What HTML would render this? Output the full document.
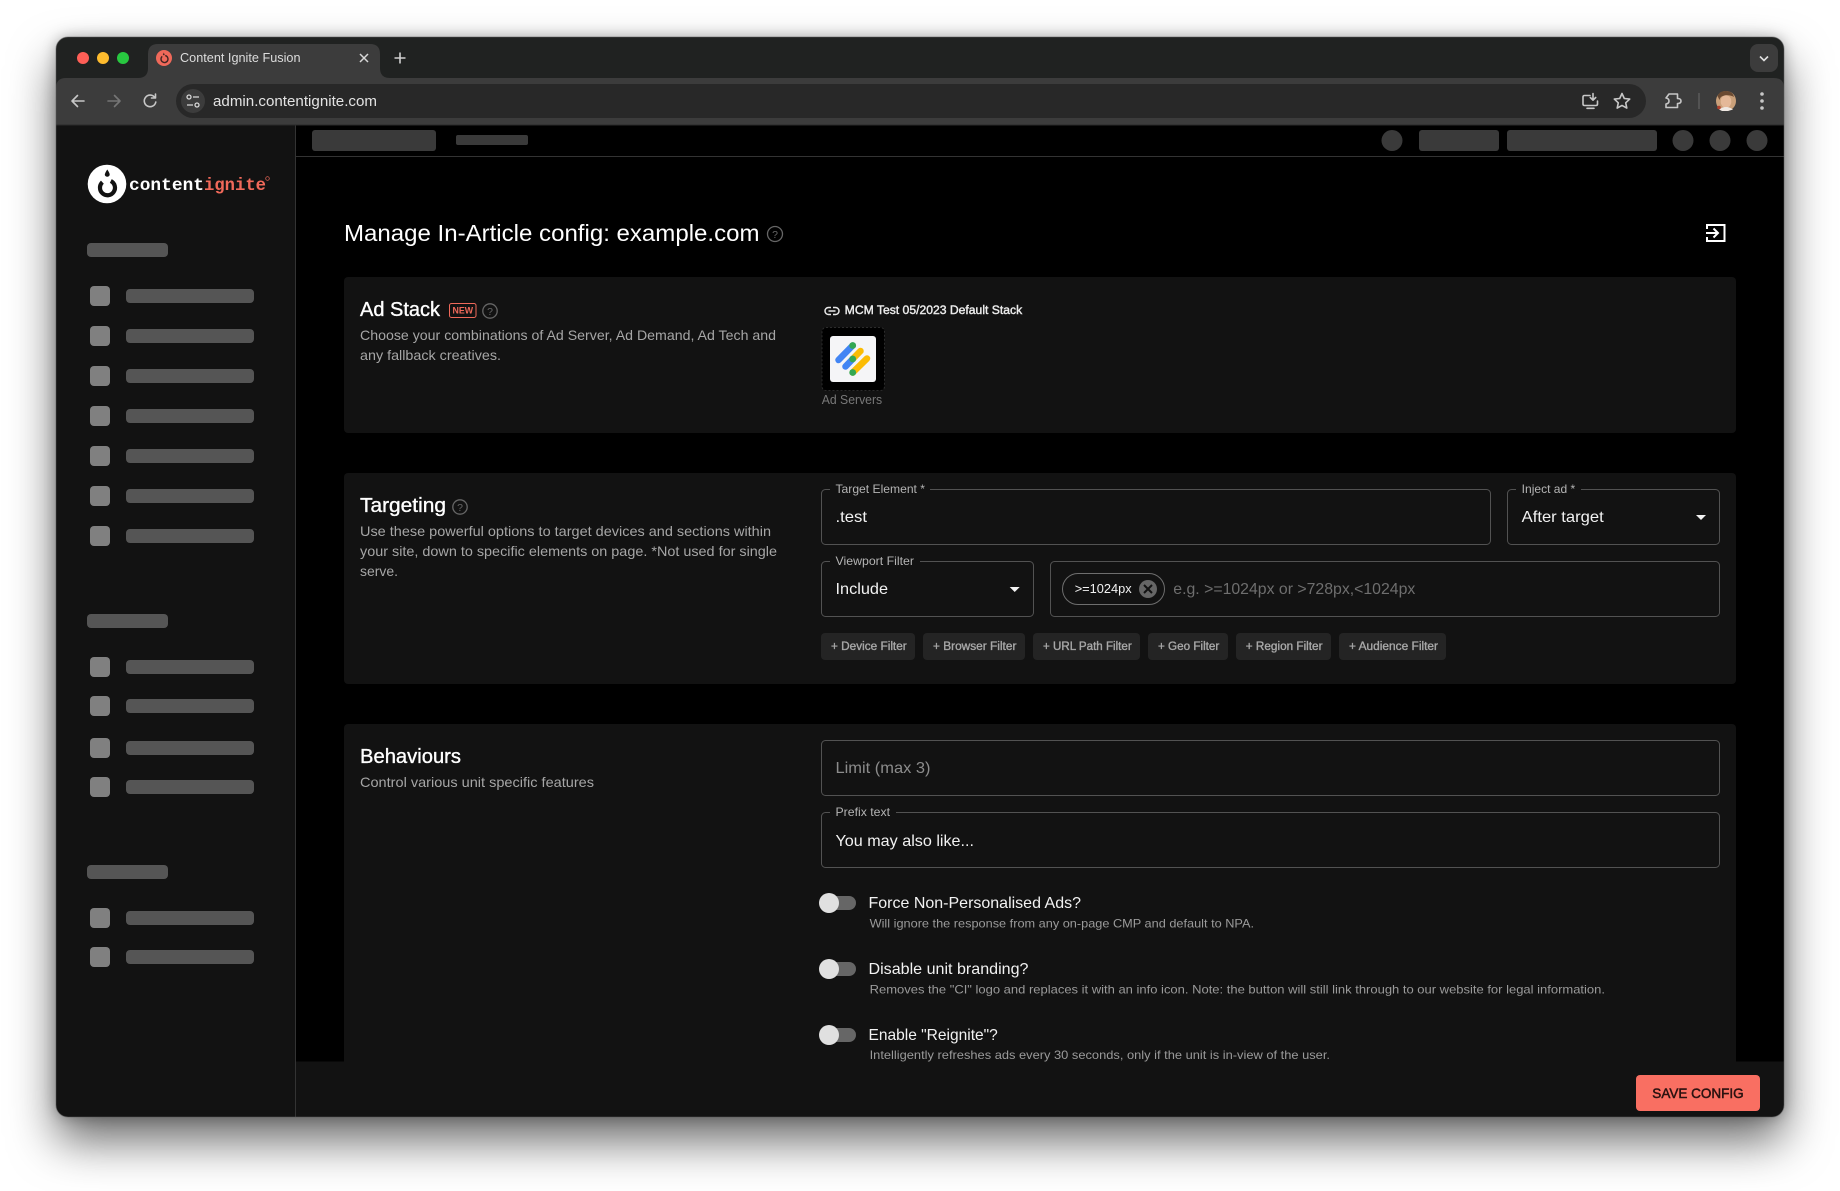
<!DOCTYPE html>
<html lang="en">
<head>
<meta charset="utf-8">
<title>Content Ignite Fusion</title>
<style>
html,body{margin:0;padding:0;width:1840px;height:1191px;overflow:hidden;background:#fff}
#shadow{position:absolute;left:56px;top:37px;width:1728px;height:1080px;border-radius:12px;box-shadow:0 24px 46px rgba(0,0,0,.58),0 0 14px rgba(0,0,0,.28)}
svg{position:absolute;left:0;top:0;display:block}
text{font-family:"Liberation Sans",sans-serif;white-space:pre}
.mono{font-family:"Liberation Mono",monospace;font-weight:700}
.f{fill:none;stroke:#525252;stroke-width:1}
.n{fill:#121212}
.lab{fill:#b4b4b4;font-size:11.7px}
.val{fill:#f2f2f2;font-size:16px}
.desc{fill:#a6a6a6;font-size:14px}
.h{fill:#fff;font-size:20px;stroke:#fff;stroke-width:.35}
.sub{fill:#9a9a9a;font-size:12px}
.btn{fill:#242424}
.bt{fill:#a8a8a8;font-size:11.5px;stroke:#a8a8a8;stroke-width:.35}
.sq{fill:#808080}
.bar{fill:#555}
.top{fill:#3a3a3a}
.help{fill:none;stroke:#666;stroke-width:1.3}
.ht{fill:#666;font-size:10.5px;text-anchor:middle}
.ic{fill:none;stroke:#c7c7c7;stroke-width:1.6;stroke-linecap:round;stroke-linejoin:round}
</style>
</head>
<body>
<div id="shadow"></div>
<svg width="1840" height="1191" viewBox="0 0 1840 1191" xmlns="http://www.w3.org/2000/svg">
<defs><clipPath id="w"><rect x="56" y="37" width="1728" height="1080" rx="12"/></clipPath></defs>
<g clip-path="url(#w)">
  <!-- browser chrome -->
  <rect x="56" y="37" width="1728" height="90" fill="#202221"/>
  <path d="M56 125V88Q56 78 66 78H1774Q1784 78 1784 88V125Z" fill="#3c3c3c"/>
  <path d="M138 78Q148 78 148 68V54Q148 44 158 44H370Q380 44 380 54V68Q380 78 390 78Z" fill="#3c3c3c"/>
  <circle cx="83" cy="58" r="6" fill="#ff5f57"/><circle cx="103" cy="58" r="6" fill="#febc2e"/><circle cx="123" cy="58" r="6" fill="#28c840"/>
  <circle cx="164" cy="58" r="8" fill="#f0695a"/>
  <path d="M165.200 55.600A3.500 3.500 0 1 1 162.200 56.400" fill="none" stroke="#402522" stroke-width="1.400"/>
  <path d="M163.800 52.500l1 2.600-2 0z" fill="#402522"/>
  <text x="180" y="62" font-size="12.5" fill="#dcdcdc" textLength="120.5" lengthAdjust="spacingAndGlyphs">Content Ignite Fusion</text>
  <path d="M360 54l8 8M368 54l-8 8" stroke="#d8d8d8" stroke-width="1.5" fill="none"/>
  <path d="M400 52.5v11M394.5 58h11" stroke="#d0d0d0" stroke-width="1.6" fill="none"/>
  <rect x="1750" y="44" width="28" height="28" rx="8" fill="#3c3c3c"/>
  <path d="M1760 56.5l4 4 4-4" fill="none" stroke="#e0e0e0" stroke-width="1.6"/>

  <path class="ic" d="M84 101H72.500M77.500 95.500L72 101L77.500 106.500"/>
  <path class="ic" style="stroke:#757575" d="M108 101H119.500M114.500 95.500L120 101L114.500 106.500"/>
  <path class="ic" d="M154.800 97.500A5.800 5.800 0 1 0 155.800 102M155.500 94V98H151.500"/>

  <rect x="176" y="84" width="1470" height="34" rx="17" fill="#282828"/>
  <circle cx="193" cy="101" r="12" fill="#3c3c3c"/>
  <circle cx="189" cy="97" r="2" fill="none" stroke="#d8d8d8" stroke-width="1.3"/>
  <path d="M193 97h6M187 105h6" stroke="#d8d8d8" stroke-width="1.3" fill="none"/>
  <circle cx="197" cy="105" r="2" fill="none" stroke="#d8d8d8" stroke-width="1.3"/>
  <text x="213" y="106" font-size="14.5" fill="#e3e3e3" textLength="164" lengthAdjust="spacingAndGlyphs">admin.contentignite.com</text>

  <path class="ic" stroke-width="1.5" d="M1590 95.500H1584.500Q1583 95.500 1583 97V104Q1583 105.500 1584.500 105.500H1596Q1597.500 105.500 1597.500 104V101M1587 108.300H1594M1593 93.500V100M1590.300 97.500L1593 100.200L1595.700 97.500"/>
  <path class="ic" d="M1622 93.500l2.300 5 5.400.6-4 3.700 1.100 5.300-4.800-2.700-4.800 2.700 1.100-5.300-4-3.700 5.400-.6z"/>
  <path class="ic" d="M1669 94H1677.500V98.500Q1681 98.500 1681 101T1677.500 103.500V107.500H1666V104Q1669 103.500 1669 101T1666 98Z"/>
  <rect x="1698.500" y="93" width="1" height="16" fill="#6a6a6a"/>
  <circle cx="1726" cy="101" r="10" fill="#c9a07a"/>
  <path d="M1717.500 96Q1720 90.500 1726 91Q1732.500 91 1734 97Q1730 94.500 1725 95.500Q1720 96 1719.500 100Z" fill="#6a4a32"/>
  <ellipse cx="1726" cy="101.500" rx="5.300" ry="6.300" fill="#e4b898"/>
  <path d="M1719 109.500Q1726 104.500 1733 109.500L1728 111H1722Z" fill="#efe8e2"/>
  <circle cx="1719" cy="107.500" r="1.800" fill="#b2402c"/>
  <circle cx="1762" cy="94" r="1.800" fill="#c7c7c7"/><circle cx="1762" cy="101" r="1.800" fill="#c7c7c7"/><circle cx="1762" cy="108" r="1.800" fill="#c7c7c7"/>

  <!-- app frame -->
  <rect x="296" y="125" width="1488" height="938" fill="#000"/>
  <rect x="56" y="125" width="240" height="992" fill="#121212"/>
  <rect x="295" y="125" width="1" height="992" fill="#333"/>
  <rect x="296" y="156" width="1488" height="1" fill="#333"/>
  <rect x="56" y="124.500" width="1728" height="1" fill="#2a2a2a"/>

  <rect class="top" x="312" y="130" width="124" height="21" rx="3"/>
  <rect class="top" x="456" y="135" width="72" height="10" rx="2"/>
  <circle class="top" cx="1392" cy="140.500" r="10.500"/>
  <rect class="top" x="1419" y="130" width="80" height="21" rx="3"/>
  <rect class="top" x="1507" y="130" width="150" height="21" rx="3"/>
  <circle class="top" cx="1683" cy="140.500" r="10.500"/>
  <circle class="top" cx="1720" cy="140.500" r="10.500"/>
  <circle class="top" cx="1757" cy="140.500" r="10.500"/>

  <!-- sidebar logo -->
  <circle cx="107" cy="184" r="19.300" fill="#fff"/>
  <path d="M110.800 181A7.500 7.500 0 1 1 102.400 182.200" fill="none" stroke="#121212" stroke-width="4.200"/>
  <path d="M107.300 169.500Q110 173.500 109.700 175A2.600 2.600 0 0 1 104.800 175Q104.800 173 107.300 169.500Z" fill="#121212"/>
  <text class="mono" x="129" y="190" font-size="17.500" fill="#fff" textLength="75" lengthAdjust="spacingAndGlyphs">content</text>
  <text class="mono" x="204" y="190" font-size="17.500" fill="#f0695a" textLength="62" lengthAdjust="spacingAndGlyphs">ignite</text>
  <circle cx="267.500" cy="178.500" r="1.800" fill="none" stroke="#f0695a" stroke-width=".7"/>

  <!-- sidebar placeholders -->
  <rect class="bar" x="87" y="243" width="81" height="14" rx="4"/>
  <rect class="sq" x="90" y="286" width="20" height="20" rx="4"/><rect class="bar" x="126" y="289" width="128" height="14" rx="4"/>
  <rect class="sq" x="90" y="326" width="20" height="20" rx="4"/><rect class="bar" x="126" y="329" width="128" height="14" rx="4"/>
  <rect class="sq" x="90" y="366" width="20" height="20" rx="4"/><rect class="bar" x="126" y="369" width="128" height="14" rx="4"/>
  <rect class="sq" x="90" y="406" width="20" height="20" rx="4"/><rect class="bar" x="126" y="409" width="128" height="14" rx="4"/>
  <rect class="sq" x="90" y="446" width="20" height="20" rx="4"/><rect class="bar" x="126" y="449" width="128" height="14" rx="4"/>
  <rect class="sq" x="90" y="486" width="20" height="20" rx="4"/><rect class="bar" x="126" y="489" width="128" height="14" rx="4"/>
  <rect class="sq" x="90" y="526" width="20" height="20" rx="4"/><rect class="bar" x="126" y="529" width="128" height="14" rx="4"/>

  <rect class="bar" x="87" y="614" width="81" height="14" rx="4"/>
  <rect class="sq" x="90" y="657" width="20" height="20" rx="4"/><rect class="bar" x="126" y="660" width="128" height="14" rx="4"/>
  <rect class="sq" x="90" y="696" width="20" height="20" rx="4"/><rect class="bar" x="126" y="699" width="128" height="14" rx="4"/>
  <rect class="sq" x="90" y="738" width="20" height="20" rx="4"/><rect class="bar" x="126" y="741" width="128" height="14" rx="4"/>
  <rect class="sq" x="90" y="777" width="20" height="20" rx="4"/><rect class="bar" x="126" y="780" width="128" height="14" rx="4"/>

  <rect class="bar" x="87" y="865" width="81" height="14" rx="4"/>
  <rect class="sq" x="90" y="908" width="20" height="20" rx="4"/><rect class="bar" x="126" y="911" width="128" height="14" rx="4"/>
  <rect class="sq" x="90" y="947" width="20" height="20" rx="4"/><rect class="bar" x="126" y="950" width="128" height="14" rx="4"/>

  <!-- page title -->
  <text x="344" y="241" font-size="23" fill="#fff" textLength="415.500" lengthAdjust="spacingAndGlyphs">Manage In-Article config: example.com</text>
  <circle class="help" cx="775" cy="234" r="7.500"/><text class="ht" x="775" y="238">?</text>
  <path d="M1707 229V225H1724.500V241H1707V237M1706 233H1718M1713.500 228.500L1718 233L1713.500 237.500" fill="none" stroke="#fff" stroke-width="2"/>

  <!-- Ad Stack card -->
  <rect x="344" y="277" width="1392" height="156" rx="4" fill="#121212"/>
  <text class="h" x="360" y="316" textLength="80" lengthAdjust="spacingAndGlyphs">Ad Stack</text>
  <rect x="449.500" y="303.500" width="26.500" height="14" rx="2" fill="none" stroke="#f0695a"/>
  <text x="452.500" y="313.500" font-size="9" fill="#f0695a" font-weight="700" textLength="20.500" lengthAdjust="spacingAndGlyphs">NEW</text>
  <circle class="help" cx="490" cy="311" r="7.200"/><text class="ht" x="490" y="315">?</text>
  <text class="desc" x="360" y="340" textLength="416" lengthAdjust="spacingAndGlyphs">Choose your combinations of Ad Server, Ad Demand, Ad Tech and</text>
  <text class="desc" x="360" y="360" textLength="141" lengthAdjust="spacingAndGlyphs">any fallback creatives.</text>

  <path d="M831 307.500H828.500A3.500 3.500 0 0 0 828.500 314.500H831M833 307.500H835.500A3.500 3.500 0 0 1 835.500 314.500H833M828.500 311H835.500" fill="none" stroke="#e8e8e8" stroke-width="1.500"/>
  <text x="844.700" y="314" font-size="11.500" fill="#ececec" stroke="#ececec" stroke-width=".4" textLength="177.500" lengthAdjust="spacingAndGlyphs">MCM Test 05/2023 Default Stack</text>
  <rect x="822" y="327.500" width="62.500" height="63" rx="4" fill="#000" stroke="#2c2c2c" stroke-dasharray="2 2"/>
  <rect x="830" y="336" width="46" height="46" rx="3" fill="#f5f5f7"/>
  <g fill="none" stroke-linecap="round" stroke-width="6.500">
    <path d="M838.500 360L852.700 345.500" stroke="#4285f4"/>
    <path d="M852.700 359L860.500 351" stroke="#fbbc04"/>
    <path d="M845.500 366.500L852.700 359" stroke="#4285f4"/>
    <path d="M852.700 372.500L867 358.500" stroke="#fbbc04"/>
  </g>
  <circle cx="852.700" cy="345.500" r="3.400" fill="#34a853"/><circle cx="852.700" cy="359" r="3.400" fill="#34a853"/><circle cx="852.700" cy="372.500" r="3.400" fill="#34a853"/>
  <text x="821.700" y="404" font-size="12.500" fill="#787878" textLength="60.500" lengthAdjust="spacingAndGlyphs">Ad Servers</text>

  <!-- Targeting card -->
  <rect x="344" y="473" width="1392" height="211" rx="4" fill="#121212"/>
  <text class="h" x="360" y="512" textLength="86" lengthAdjust="spacingAndGlyphs">Targeting</text>
  <circle class="help" cx="460" cy="507" r="7.200"/><text class="ht" x="460" y="511">?</text>
  <text class="desc" x="360" y="536" textLength="411" lengthAdjust="spacingAndGlyphs">Use these powerful options to target devices and sections within</text>
  <text class="desc" x="360" y="556" textLength="417" lengthAdjust="spacingAndGlyphs">your site, down to specific elements on page. *Not used for single</text>
  <text class="desc" x="360" y="576" textLength="38" lengthAdjust="spacingAndGlyphs">serve.</text>

  <rect class="f" x="821.500" y="489.500" width="669" height="55" rx="4"/>
  <rect class="n" x="830" y="486" width="100" height="8"/>
  <text class="lab" x="835.500" y="493" textLength="89.500" lengthAdjust="spacingAndGlyphs">Target Element *</text>
  <text class="val" x="835.500" y="522" textLength="31.500" lengthAdjust="spacingAndGlyphs">.test</text>

  <rect class="f" x="1507.500" y="489.500" width="212" height="55" rx="4"/>
  <rect class="n" x="1516" y="486" width="65" height="8"/>
  <text class="lab" x="1521.700" y="493" textLength="53.500" lengthAdjust="spacingAndGlyphs">Inject ad *</text>
  <text class="val" x="1521.700" y="522" textLength="82" lengthAdjust="spacingAndGlyphs">After target</text>
  <path d="M1696 515H1706L1701 520Z" fill="#f2f2f2"/>

  <rect class="f" x="821.500" y="561.500" width="212" height="55" rx="4"/>
  <rect class="n" x="830" y="558" width="90" height="8"/>
  <text class="lab" x="835.500" y="565" textLength="78.500" lengthAdjust="spacingAndGlyphs">Viewport Filter</text>
  <text class="val" x="835.500" y="594" textLength="52.500" lengthAdjust="spacingAndGlyphs">Include</text>
  <path d="M1009.700 587H1019.700L1014.700 592Z" fill="#f2f2f2"/>

  <rect class="f" x="1050.500" y="561.500" width="669" height="55" rx="4"/>
  <rect x="1062.500" y="573.500" width="102" height="31" rx="15.500" fill="none" stroke="#6e6e6e"/>
  <text x="1074.700" y="593" font-size="13" fill="#f2f2f2" textLength="57" lengthAdjust="spacingAndGlyphs">&gt;=1024px</text>
  <circle cx="1148" cy="589" r="9" fill="#666"/>
  <path d="M1144 585l8 8M1152 585l-8 8" stroke="#121212" stroke-width="2" fill="none"/>
  <text x="1173.300" y="594" font-size="16" fill="#6e6e6e" textLength="242" lengthAdjust="spacingAndGlyphs">e.g. &gt;=1024px or &gt;728px,&lt;1024px</text>

  <rect class="btn" x="821" y="633" width="94" height="27" rx="4"/>
  <text class="bt" x="831" y="650" textLength="75.700" lengthAdjust="spacingAndGlyphs">+ Device Filter</text>
  <rect class="btn" x="923" y="633" width="102" height="27" rx="4"/>
  <text class="bt" x="933" y="650" textLength="83.400" lengthAdjust="spacingAndGlyphs">+ Browser Filter</text>
  <rect class="btn" x="1033" y="633" width="107" height="27" rx="4"/>
  <text class="bt" x="1043" y="650" textLength="88.700" lengthAdjust="spacingAndGlyphs">+ URL Path Filter</text>
  <rect class="btn" x="1148" y="633" width="80" height="27" rx="4"/>
  <text class="bt" x="1158" y="650" textLength="61.300" lengthAdjust="spacingAndGlyphs">+ Geo Filter</text>
  <rect class="btn" x="1236" y="633" width="95" height="27" rx="4"/>
  <text class="bt" x="1245.800" y="650" textLength="76.700" lengthAdjust="spacingAndGlyphs">+ Region Filter</text>
  <rect class="btn" x="1339" y="633" width="107" height="27" rx="4"/>
  <text class="bt" x="1349" y="650" textLength="89" lengthAdjust="spacingAndGlyphs">+ Audience Filter</text>

  <!-- Behaviours card -->
  <rect x="344" y="724" width="1392" height="345" rx="4" fill="#121212"/>
  <text class="h" x="360" y="763" textLength="101" lengthAdjust="spacingAndGlyphs">Behaviours</text>
  <text class="desc" x="360" y="787" textLength="234" lengthAdjust="spacingAndGlyphs">Control various unit specific features</text>

  <rect class="f" x="821.500" y="740.500" width="898" height="55" rx="4"/>
  <text x="835.500" y="773" font-size="16" fill="#8c8c8c" textLength="95" lengthAdjust="spacingAndGlyphs">Limit (max 3)</text>

  <rect class="f" x="821.500" y="812.500" width="898" height="55" rx="4"/>
  <rect class="n" x="830" y="809" width="66" height="8"/>
  <text class="lab" x="835.500" y="816" textLength="54.500" lengthAdjust="spacingAndGlyphs">Prefix text</text>
  <text class="val" x="835.500" y="846" textLength="138.500" lengthAdjust="spacingAndGlyphs">You may also like...</text>

  <rect x="820" y="896" width="36" height="14" rx="7" fill="#666"/>
  <circle cx="829" cy="903" r="10" fill="#e0e0e0"/>
  <text class="val" x="868.500" y="908" textLength="212.500" lengthAdjust="spacingAndGlyphs">Force Non-Personalised Ads?</text>
  <text class="sub" x="869.600" y="927.300" textLength="384.400" lengthAdjust="spacingAndGlyphs">Will ignore the response from any on-page CMP and default to NPA.</text>

  <rect x="820" y="962" width="36" height="14" rx="7" fill="#666"/>
  <circle cx="829" cy="969" r="10" fill="#e0e0e0"/>
  <text class="val" x="868.500" y="974" textLength="160" lengthAdjust="spacingAndGlyphs">Disable unit branding?</text>
  <text class="sub" x="869.600" y="993.300" textLength="735.400" lengthAdjust="spacingAndGlyphs">Removes the "CI" logo and replaces it with an info icon. Note: the button will still link through to our website for legal information.</text>

  <rect x="820" y="1028" width="36" height="14" rx="7" fill="#666"/>
  <circle cx="829" cy="1035" r="10" fill="#e0e0e0"/>
  <text class="val" x="868.500" y="1040" textLength="129.300" lengthAdjust="spacingAndGlyphs">Enable "Reignite"?</text>

  <!-- footer -->
  <rect x="296" y="1061.500" width="1488" height="56" fill="#121212"/>
  <rect x="295" y="1061" width="1" height="56" fill="#333"/>
  <text class="sub" x="869.600" y="1059" textLength="460.400" lengthAdjust="spacingAndGlyphs">Intelligently refreshes ads every 30 seconds, only if the unit is in-view of the user.</text>
  <rect x="1636" y="1075" width="124" height="36" rx="4" fill="#f96f62"/>
  <text x="1652.300" y="1098" font-size="14" fill="#2b1210" stroke="#2b1210" stroke-width=".5" textLength="91.400" lengthAdjust="spacingAndGlyphs">SAVE CONFIG</text>
</g>
<rect x="56" y="37" width="1728" height="1080" rx="12" fill="none" stroke="#5c5c5c" stroke-opacity=".5" stroke-width="1"/>
</svg>
</body>
</html>
